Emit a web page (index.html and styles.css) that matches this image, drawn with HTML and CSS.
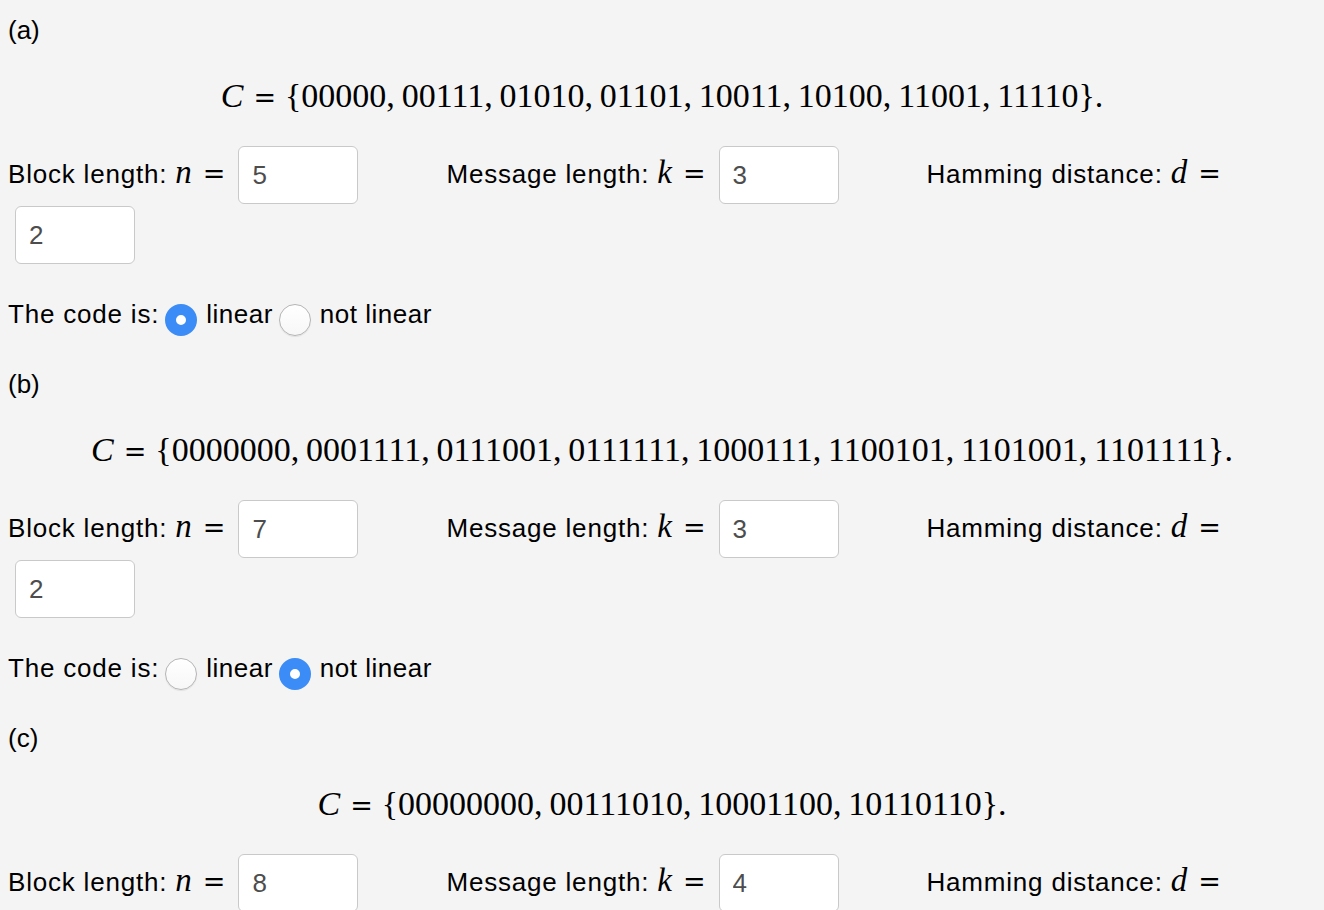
FILE: index.html
```html
<!DOCTYPE html>
<html>
<head>
<meta charset="utf-8">
<link rel="stylesheet" href="styles.css">
</head>
<body>
<div class="part">
  <div class="tag">(a)</div>
  <div class="math"><i class="mc">C</i><span class="eq">=</span>{00000,&thinsp;00111,&thinsp;01010,&thinsp;01101,&thinsp;10011,&thinsp;10100,&thinsp;11001,&thinsp;11110}.</div>
  <div class="fields">
    <div class="field"><span class="lbl">Block length: <i class="mi">n</i><span class="eq">=</span></span><input class="box" type="text" value="5"></div>
    <div class="field"><span class="lbl">Message length: <i class="mi">k</i><span class="eq">=</span></span><input class="box" type="text" value="3"></div>
    <div class="field"><span class="lbl">Hamming distance: <i class="mi">d</i><span class="eq">=</span></span></div>
    <input class="box" type="text" value="2">
  </div>
  <div class="choice"><span class="lbl">The code is:</span><input class="radio" type="radio" name="a" checked><span class="lbl opt">linear</span><input class="radio" type="radio" name="a"><span class="lbl opt">not linear</span></div>
</div>
<div class="part">
  <div class="tag">(b)</div>
  <div class="math"><i class="mc">C</i><span class="eq">=</span>{0000000,&thinsp;0001111,&thinsp;0111001,&thinsp;0111111,&thinsp;1000111,&thinsp;1100101,&thinsp;1101001,&thinsp;1101111}.</div>
  <div class="fields">
    <div class="field"><span class="lbl">Block length: <i class="mi">n</i><span class="eq">=</span></span><input class="box" type="text" value="7"></div>
    <div class="field"><span class="lbl">Message length: <i class="mi">k</i><span class="eq">=</span></span><input class="box" type="text" value="3"></div>
    <div class="field"><span class="lbl">Hamming distance: <i class="mi">d</i><span class="eq">=</span></span></div>
    <input class="box" type="text" value="2">
  </div>
  <div class="choice"><span class="lbl">The code is:</span><input class="radio" type="radio" name="b"><span class="lbl opt">linear</span><input class="radio" type="radio" name="b" checked><span class="lbl opt">not linear</span></div>
</div>
<div class="part">
  <div class="tag">(c)</div>
  <div class="math"><i class="mc">C</i><span class="eq">=</span>{00000000,&thinsp;00111010,&thinsp;10001100,&thinsp;10110110}.</div>
  <div class="fields">
    <div class="field"><span class="lbl">Block length: <i class="mi">n</i><span class="eq">=</span></span><input class="box" type="text" value="8"></div>
    <div class="field"><span class="lbl">Message length: <i class="mi">k</i><span class="eq">=</span></span><input class="box" type="text" value="4"></div>
    <div class="field"><span class="lbl">Hamming distance: <i class="mi">d</i><span class="eq">=</span></span></div>
    <input class="box" type="text" value="">
  </div>
</div>
</body>
</html>
```
FILE: styles.css
```css
html, body {
  margin: 0;
  background: #f4f4f4;
}
body {
  padding: 12px 8px 0 8px;
  font-family: "Liberation Sans", Arial, sans-serif;
  font-size: 26px;
  color: #000;
}
.part + .part {
  margin-top: 34px;
}
.tag {
  line-height: 36px;
  height: 36px;
}
.math {
  margin-top: 26px;
  height: 44px;
  line-height: 44px;
  text-align: center;
  font-family: "Liberation Serif", "Times New Roman", serif;
  font-size: 34px;
  color: #000;
}
.mc {
  font-style: italic;
}
.math .eq {
  font-family: "DejaVu Serif", serif;
  font-style: normal;
  font-size: 27px;
  margin: 0 9px 0 10px;
}
.fields {
  margin-top: 28px;
  display: flex;
  flex-wrap: wrap;
  align-items: center;
  column-gap: 88px;
  row-gap: 2px;
}
.field {
  display: flex;
  align-items: center;
}
.lbl {
  letter-spacing: 0.8px;
  white-space: nowrap;
}
.field .lbl {
  margin-bottom: 6px;
}
.mi {
  font-family: "Liberation Serif", serif;
  font-size: 33px;
  font-style: italic;
  letter-spacing: 0;
}
.field .eq {
  font-family: "DejaVu Serif", serif;
  font-size: 27px;
  letter-spacing: 0;
  margin: 0 0 0 11px;
}
.box {
  box-sizing: border-box;
  width: 120px;
  height: 58px;
  margin: 0 0 0 13px;
  padding: 0 13px;
  border: 1px solid #c9c9c9;
  border-radius: 6px;
  background: #fff;
  font-family: "Liberation Sans", Arial, sans-serif;
  font-size: 26px;
  color: #4d4d4d;
  outline: none;
}
.fields > .box {
  margin-left: 7px;
}
.choice {
  margin-top: 32px;
  display: flex;
  align-items: center;
  height: 36px;
  line-height: 36px;
}
.choice .lbl {
  letter-spacing: 0.8px;
}
.choice .opt {
  letter-spacing: 0.5px;
  margin-left: 9px;
}
.radio {
  -webkit-appearance: none;
  appearance: none;
  box-sizing: border-box;
  width: 32px;
  height: 32px;
  margin: 11px 0 0 6px;
  border-radius: 50%;
  border: 1px solid #b5b5b5;
  background: linear-gradient(#ffffff, #f7f7f7);
  box-shadow: 0 1px 1px rgba(0,0,0,0.08);
  flex: none;
}
.radio:checked {
  border: 11.5px solid #3b8cf6;
  background: #fff;
  box-shadow: none;
}
```
